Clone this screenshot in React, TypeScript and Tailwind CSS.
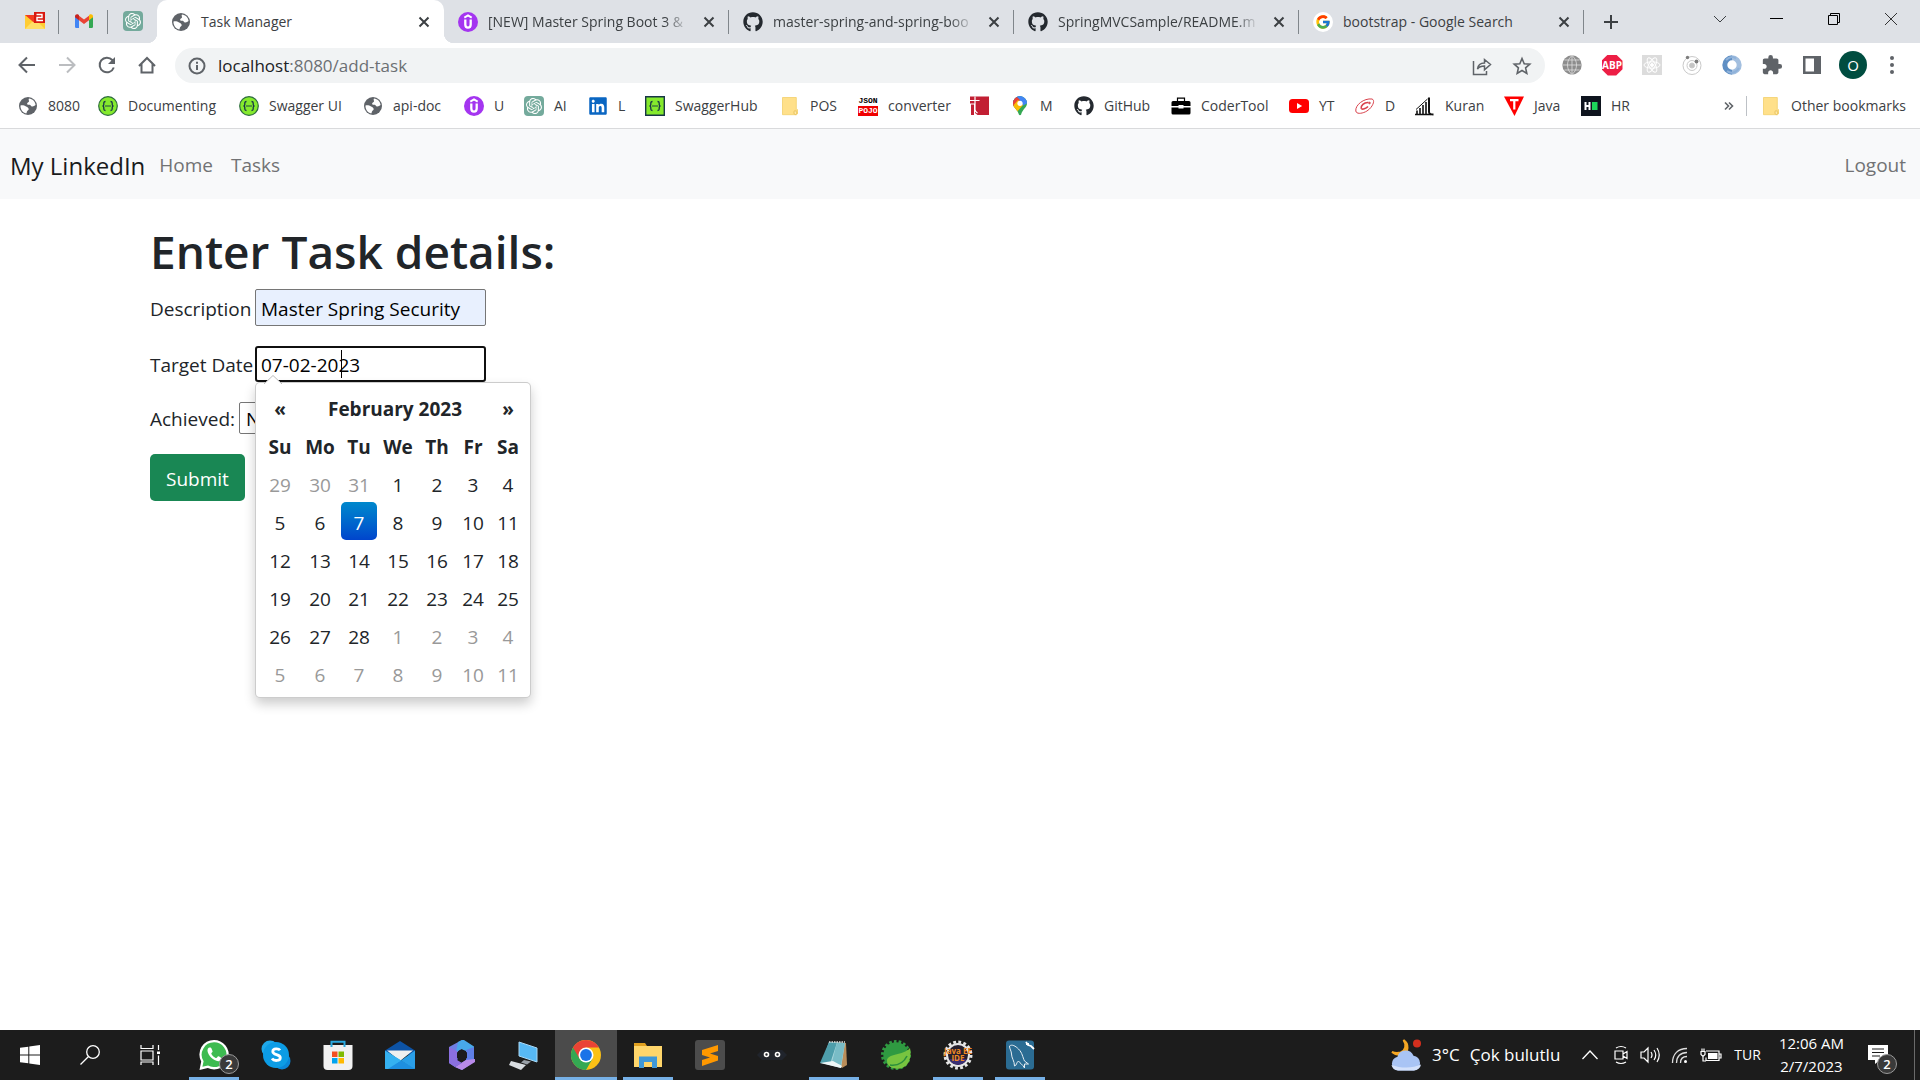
import React from "react";
import { FaGithub, FaLinkedin } from "react-icons/fa";
import { FcGoogle } from "react-icons/fc";
import { MdExtension } from "react-icons/md";
import { SiOpenai } from "react-icons/si";

type IconProps = { className?: string };

/* ---------- favicons ---------- */

const Globe = () => (
  <svg viewBox="0 0 20 20" className="size-5 shrink-0">
    <circle cx="10" cy="10" r="9" fill="#5f6368" />
    <path d="M11 2.500c3.500.4 6.200 3 6.600 6.600-1.200.5-2 1.700-3.600 1.500-1.200-.2-1-1.600-2.200-1.900-1.100-.2-2.600.2-2.700-1 0-1.200 1.600-1.100 1.900-2.100.2-1-.9-2-.0-3.100z" fill="#fff" />
    <path d="M2.500 9.500c1.800-.6 4 0 5.600.9 1.300.8 2.400 1.300 2.600 2.600.1 1.100-1.200 1.500-1.700 2.400-.3.700-.2 1.400-.8 2C4.800 16.700 2.200 13.500 2.500 9.500z" fill="#fff" />
  </svg>
);

const MailBadge = () => (
  <svg viewBox="0 0 20 20" className="size-5 shrink-0">
    <path d="M0 4h20v14H0z" fill="#fc3" />
    <path d="m0 18 7-7h6l7 7z" fill="#ffdf66" />
    <path d="M0 4h11v6l-1.500 2L0 4z" fill="#f33b1f" />
    <path d="M9 1h11v11H9z" fill="#d8180f" />
    <path d="M11.500 3.500h5.500v3h-5v3h6" fill="none" stroke="#fff" strokeWidth="1.400" />
  </svg>
);

const Gmail = () => (
  <svg viewBox="0 0 20 20" className="size-5 shrink-0">
    <path d="M1 5.500 5 8.600V17H2.200A1.200 1.200 0 0 1 1 15.800z" fill="#4285f4" />
    <path d="m15 8.600 4-3.100v10.300a1.200 1.200 0 0 1-1.200 1.200H15z" fill="#34a853" />
    <path d="m5 4.700 5 3.800 5-3.800v4.500l-5 3.800-5-3.800z" fill="#ea4335" />
    <path d="M1 5.200c0-1.900 2-2.600 3.300-1.600L5 4.200v5L1 6.200z" fill="#c5221f" />
    <path d="M19 5.200c0-1.900-2-2.600-3.300-1.600l-.7.6v5l4-3z" fill="#fbbc04" />
  </svg>
);

const OpenAi = () => (
  <span className="flex size-5 shrink-0 items-center justify-center rounded-sm bg-[#74aa9c] text-white">
    <SiOpenai className="size-4" />
  </span>
);

const Udemy = () => (
  <svg viewBox="0 0 20 20" className="size-5 shrink-0">
    <circle cx="10" cy="10" r="10" fill="#a435f0" />
    <path d="M6.300 5.600 10 3.400l3.700 2.200" fill="none" stroke="#fff" strokeWidth="1.900" />
    <path d="M7.300 7.500v5c0 2 1 3.100 2.700 3.100s2.700-1.100 2.700-3.100v-5" fill="none" stroke="#fff" strokeWidth="2.300" />
  </svg>
);

const Google = () => (
  <span className="flex size-5 shrink-0 items-center justify-center rounded-full bg-white">
    <FcGoogle className="size-4" />
  </span>
);

const Braces = () => (
  <>
    <path d="M7.500 5.500c-1.400 0-1.700.5-1.700 1.500v1.600c0 .9-.4 1.400-1.300 1.400.9 0 1.300.5 1.300 1.400V13c0 1 .3 1.500 1.700 1.500M12.500 5.500c1.400 0 1.700.5 1.700 1.500v1.600c0 .9.4 1.400 1.300 1.400-.9 0-1.300.5-1.300 1.400V13c0 1-.3 1.500-1.700 1.500" fill="none" stroke="#173647" strokeWidth="1.300" />
    <path d="M7.400 10h1.200M9.400 10h1.200M11.400 10h1.200" stroke="#173647" strokeWidth="1.300" />
  </>
);

const Swagger = () => (
  <svg viewBox="0 0 20 20" className="size-5 shrink-0">
    <circle cx="10" cy="10" r="9.300" fill="#85ea2d" stroke="#2b6b3d" strokeWidth="1.200" />
    <Braces />
  </svg>
);

const SwaggerHub = () => (
  <svg viewBox="0 0 20 20" className="size-5 shrink-0">
    <path d="M.7.7h18.600v18.600H.7z" fill="#85ea2d" stroke="#173647" strokeWidth="1.400" />
    <Braces />
  </svg>
);

const Folder = () => (
  <svg viewBox="0 0 20 20" className="size-5 shrink-0">
    <path d="M2.500 1.500h13.800v13l1.200-1v4.300l-1 .9H2.500z" fill="#ffe08a" stroke="#f3cf6b" strokeWidth=".8" />
    <path d="M14 15.500c0-1 2.800-1 2.800 1.300 0 1-.6 1.800-1.400 1.800s-1.400-.8-1.400-1.800z" fill="#ffe9a8" stroke="#e3b94d" strokeWidth=".8" />
  </svg>
);

const JsonPojo = () => (
  <span className="flex size-5 shrink-0 flex-col text-center font-['Liberation_Mono'] text-[8px] leading-[10px] font-bold">
    <span className="h-2.5 text-black">JSON</span>
    <span className="h-2.5 bg-[#f00000] text-white">POJO</span>
  </span>
);

const RedBook = () => (
  <svg viewBox="0 0 20 20" className="size-5 shrink-0">
    <path d="M0 .5h19V19H7.500L5 17V7.500H0z" fill="#c21f33" />
    <path d="M1 8.500h3V19H1z" fill="#c21f33" />
    <path d="M0 4.500h9.500M5 .5v13q0 2 2.500 3.500" fill="none" stroke="#fff" strokeWidth="1.200" />
  </svg>
);

const Maps = () => (
  <svg viewBox="0 0 20 20" className="size-5 shrink-0">
    <defs>
      <clipPath id="pin">
        <path d="M10 .3a7 7 0 0 1 7 7c0 4.200-4.200 5.700-5.900 11.200-.3 1.100-1.900 1.100-2.200 0C7.200 13 3 11.500 3 7.300a7 7 0 0 1 7-7z" />
      </clipPath>
    </defs>
    <g clipPath="url(#pin)">
      <path d="M0 0h20v20H0z" fill="#34a853" />
      <path d="M0 14 20-8H0z" fill="#1a73e8" />
      <path d="M7 0h13v6l-8 4z" fill="#4285f4" />
      <path d="M0 5v-5h6l4 4-6 8z" fill="#ea4335" />
      <path d="m2 11 6-7 5 5-7 8z" fill="#fbbc04" />
    </g>
    <circle cx="10" cy="7.300" r="2.600" fill="#fff" />
  </svg>
);

const GitHub = () => <FaGithub className="size-5 shrink-0 text-[#24292f]" />;
const LinkedIn = () => <FaLinkedin className="size-5 shrink-0 text-[#0a66c2]" />;

const Toolbox = () => (
  <svg viewBox="0 0 20 20" className="size-5 shrink-0">
    <path d="M6.500 5V2.200h7V5" fill="none" stroke="#000" strokeWidth="1.200" />
    <path d="M2 5h16q1.500 0 1.500 1.500V10H12.500V9h-5v1H.5V6.500Q.5 5 2 5zM.5 11.500h7v1h5v-1h7V17q0 1.500-1.500 1.500H2Q.5 18.500.5 17z" fill="#000" />
  </svg>
);

const YouTube = () => (
  <svg viewBox="0 0 20 20" className="size-5 shrink-0">
    <rect y="3" width="20" height="14" rx="3.500" fill="#f00" />
    <path d="m8 7 5.200 3L8 13z" fill="#fff" />
  </svg>
);

const Swirl = () => (
  <svg viewBox="0 0 20 20" className="size-5 shrink-0" fill="none" stroke="#d9414b">
    <path d="M17 3C9 2 0 9 .8 15c.5 4 9.200 2.500 13.700-2 4-4 5.500-9 2.500-10z" strokeWidth="1" />
    <path d="M13.500 6.500C9 6 5.500 10 6.200 12.300c.8 1.800 5 .2 6.800-1.800" strokeWidth="1.600" />
    <circle cx="14.500" cy="7" r=".8" fill="#d9414b" />
  </svg>
);

const Bars = () => (
  <svg viewBox="0 0 20 20" className="size-5 shrink-0" fill="none" stroke="#111">
    <path d="M0 18.500h16M2 18v-3.500M5 18v-6M8 18V9M11 18V6" strokeWidth="1.600" />
    <path d="M14 1.500V16q0 2.500 4.500 2.500" strokeWidth="2" />
    <path d="M1 13.500 12.500 3" strokeWidth="1" />
  </svg>
);

const Testify = () => (
  <svg viewBox="0 0 20 20" className="size-5 shrink-0">
    <path d="M0 .5h20L10.500 20z" fill="#f00" />
    <path d="M6 4.200h8.500M10.300 4.500v9" stroke="#fff" strokeWidth="2.200" />
  </svg>
);

const HackerRank = () => (
  <svg viewBox="0 0 20 20" className="size-5 shrink-0">
    <path d="M0 0h20v20H0z" fill="#0e141e" />
    <path d="M4.500 6v8M8.500 6v8M4.500 10h4" stroke="#fff" strokeWidth="2" />
    <path d="M11 6h5.500v8H11z" fill="#1dd65a" />
  </svg>
);

/* ---------- browser chrome ---------- */

const CloseX = () => (
  <svg viewBox="0 0 20 20" className="size-5" fill="none" stroke="#3c4043" strokeWidth="2">
    <path d="m5.500 5.500 9 9M14.500 5.500l-9 9" />
  </svg>
);

function Tab({ icon, title, active, faded }: { icon: React.ReactNode; title: string; active?: boolean; faded?: boolean }) {
  return (
    <div
      className={
        active
          ? "relative flex w-[287px] items-center gap-2.5 rounded-t-[10px] bg-white pr-2.5 pl-3.5"
          : "relative flex w-[285px] items-center gap-2.5 pr-2.5 pl-3.5"
      }
    >
      {active && (
        <>
          <span className="absolute bottom-0 -left-2.5 size-2.5 bg-[radial-gradient(circle_at_0_0,#dee1e6_10px,white_10.5px)]" />
          <span className="absolute -right-2.5 bottom-0 z-10 size-2.5 bg-[radial-gradient(circle_at_100%_0,#dee1e6_10px,white_10.5px)]" />
        </>
      )}
      {icon}
      <a
        href="#tab"
        className={
          faded
            ? "flex-1 [mask-image:linear-gradient(to_right,black_88%,transparent)] text-sm whitespace-nowrap text-[#3c4043]"
            : "flex-1 text-sm whitespace-nowrap text-[#3c4043]"
        }
      >
        {title}
      </a>
      <button aria-label={"Close " + title}>
        <CloseX />
      </button>
      {!active && <span className="absolute top-2.5 right-0 h-6 w-px bg-[#80868b]" />}
    </div>
  );
}

function TabStrip() {
  return (
    <div className="flex h-[43px] bg-[#dee1e6]">
      <div className="flex pb-px pl-2.5">
        {[<MailBadge key="m" />, <Gmail key="g" />, <OpenAi key="o" />].map((icon, i) => (
          <button key={i} aria-label="Pinned tab" className="relative flex w-[49px] items-center justify-center">
            {icon}
            {i < 2 && <span className="absolute top-2.5 right-0 h-6 w-px bg-[#80868b]" />}
          </button>
        ))}
      </div>
      <Tab active icon={<Globe />} title="Task Manager" />
      <Tab faded icon={<Udemy />} title="[NEW] Master Spring Boot 3 &" />
      <Tab faded icon={<GitHub />} title="master-spring-and-spring-boo" />
      <Tab faded icon={<GitHub />} title="SpringMVCSample/README.m" />
      <Tab icon={<Google />} title="bootstrap - Google Search" />
      <button aria-label="New tab" className="flex w-[54px] items-center justify-center">
        <svg viewBox="0 0 16 16" className="size-4" stroke="#3c4043" strokeWidth="2">
          <path d="M8 1v14M1 8h14" />
        </svg>
      </button>
      <div className="ml-auto flex pb-1.5">
        <button aria-label="Search tabs" className="flex w-[57px] items-center justify-center">
          <svg viewBox="0 0 14 14" className="size-3.5" fill="none" stroke="#3c4043">
            <path d="m1 4 6 6 6-6" />
          </svg>
        </button>
        <button aria-label="Minimize" className="flex w-[57px] items-center justify-center">
          <span className="h-px w-[13px] bg-black" />
        </button>
        <button aria-label="Restore" className="flex w-[57px] items-center justify-center">
          <svg viewBox="0 0 14 14" className="size-3.5" fill="none" stroke="#000">
            <path d="M1.500 3.500h9v9h-9zM3.500 3.500v-2h9v9h-2" />
          </svg>
        </button>
        <button aria-label="Close window" className="flex w-[58px] items-center justify-center">
          <svg viewBox="0 0 14 14" className="size-3.5" fill="none" stroke="#333">
            <path d="m1 1 12 12M13 1 1 13" />
          </svg>
        </button>
      </div>
    </div>
  );
}

function NavButton({ label, children, dim }: { label: string; children: React.ReactNode; dim?: boolean }) {
  return (
    <button aria-label={label} className={dim ? "flex w-10 items-center justify-center text-[#bbbdc0]" : "flex w-10 items-center justify-center text-[#5f6368]"}>
      <svg viewBox="0 0 20 20" className="size-5" fill="none" stroke="currentColor" strokeWidth="2">
        {children}
      </svg>
    </button>
  );
}

function Toolbar() {
  return (
    <div className="flex h-[45px] bg-white pr-2.5 pb-px pl-[7px]">
      <NavButton label="Back">
        <path d="M18 10H3M10 2.500 2.500 10l7.500 7.500" />
      </NavButton>
      <NavButton label="Forward" dim>
        <path d="M2 10h15M10 2.500l7.500 7.500-7.500 7.500" />
      </NavButton>
      <NavButton label="Reload">
        <path d="M16.800 12.500A7.300 7.300 0 1 1 15.300 5l1.500 1.500" />
        <path d="M18 2v7h-7z" fill="currentColor" stroke="none" />
      </NavButton>
      <NavButton label="Home">
        <path d="M2 11 10 3l8 8M4.500 9v8.500h11V9" />
      </NavButton>
      <div className="mt-[5px] ml-2 flex h-[35px] flex-1 items-center rounded-full bg-[#f1f3f4] pr-[13px] pl-3">
        <svg viewBox="0 0 20 20" className="size-5" fill="none" stroke="#5f6368" strokeWidth="2">
          <circle cx="10" cy="10" r="7.500" />
          <path d="M10 9v5M10 5.800v1.900" />
        </svg>
        <a href="#address" className="ml-[11px] flex-1 text-[17px] leading-6 text-[#6b6f73]">
          <span className="text-[#202124]">localhost</span>:8080/add-task
        </a>
        <button aria-label="Share">
          <svg viewBox="0 0 20 20" className="size-5" fill="none" stroke="#5f6368" strokeWidth="1.500">
            <path d="M1.500 5v13.500h13V15M5.500 13c.5-4 3-6 7-6V3.500l6 5-6 5.300v-3.700c-3.500 0-5.500.8-7 2.900z" />
          </svg>
        </button>
        <button aria-label="Bookmark this page" className="ml-5">
          <svg viewBox="0 0 20 20" className="size-5" fill="none" stroke="#5f6368" strokeWidth="1.600">
            <path d="m10 2.500 2.200 5.200 5.600.5-4.200 3.700 1.200 5.500-4.800-2.900-4.800 2.900 1.200-5.500-4.200-3.700 5.600-.5z" />
          </svg>
        </button>
      </div>
      <div className="ml-[7px] flex items-center">
        <button aria-label="Translate extension" className="flex w-10 justify-center">
          <svg viewBox="0 0 20 20" className="size-5">
            <circle cx="10" cy="10" r="9.700" fill="#8d8d8d" />
            <path d="M10 0v20M.5 10h19M2.500 5h15M2.500 15h15M10 .5C4 5 4 15 10 19.500M10 .5c6 4.500 6 14.500 0 19" fill="none" stroke="#e0e0e0" strokeWidth=".8" />
          </svg>
        </button>
        <button aria-label="Ad block" className="flex w-10 justify-center">
          <span className="flex size-[21px] items-center justify-center bg-[#ed1e45] text-[10px] font-bold text-white [clip-path:polygon(30%_0,70%_0,100%_30%,100%_70%,70%_100%,30%_100%,0_70%,0_30%)]">
            ABP
          </span>
        </button>
        <button aria-label="React tools" className="flex w-10 justify-center">
          <svg viewBox="0 0 20 20" className="size-5" fill="none" stroke="#fff">
            <path d="M0 0h20v20H0z" fill="#dcdcdc" stroke="none" />
            <ellipse cx="10" cy="10" rx="8" ry="3.200" />
            <ellipse cx="10" cy="10" rx="8" ry="3.200" transform="rotate(60 10 10)" />
            <ellipse cx="10" cy="10" rx="8" ry="3.200" transform="rotate(120 10 10)" />
            <circle cx="10" cy="10" r="1.500" fill="#fff" />
          </svg>
        </button>
        <button aria-label="Orbit extension" className="flex w-10 justify-center">
          <svg viewBox="0 0 20 20" className="size-5" fill="none" stroke="#c9c9c9">
            <circle cx="10" cy="10.500" r="9" />
            <circle cx="10" cy="10.500" r="5" />
            <circle cx="10" cy="10.500" r="2.500" fill="#c4c4c4" />
            <circle cx="5.500" cy="2.500" r="1.700" fill="#7d7d7d" stroke="none" />
            <circle cx="14.500" cy="6.500" r="1.900" fill="#7d7d7d" stroke="none" />
          </svg>
        </button>
        <button aria-label="JSON viewer" className="flex w-10 justify-center">
          <svg viewBox="0 0 20 20" className="size-5" fill="none" strokeWidth="5">
            <path d="M10 2.800a7.200 7.200 0 0 1 0 14.400" stroke="#a3bfdf" />
            <path d="M10 17.200a7.200 7.200 0 0 1 0-14.400" stroke="#5f8fc4" />
            <path d="M5 16c4 3 9 2 12-3M14 3.500C11 1 7 2 4 5" stroke="#8fb2da" strokeWidth="2" />
          </svg>
        </button>
        <button aria-label="Extensions" className="flex w-10 justify-center text-[#5f6368]">
          <MdExtension className="size-[22px]" />
        </button>
        <button aria-label="Side panel" className="flex w-10 justify-center">
          <svg viewBox="0 0 18 18" className="size-[18px]">
            <path d="M0 0h18v18H0zM2.500 2.500v13H11v-13z" fill="#5f6368" fillRule="evenodd" />
          </svg>
        </button>
        <button aria-label="Profile" className="mx-[7px] flex size-7 items-center justify-center rounded-full bg-[#004d40] text-[15px] leading-5 text-white">
          O
        </button>
        <button aria-label="Menu" className="flex w-9 flex-col items-center gap-[3px]">
          <span className="size-1 rounded-full bg-[#5f6368]" />
          <span className="size-1 rounded-full bg-[#5f6368]" />
          <span className="size-1 rounded-full bg-[#5f6368]" />
        </button>
      </div>
    </div>
  );
}

const bookmarks: { icon: React.ReactNode; label: string; box: string }[] = [
  { icon: <Globe />, label: "8080", box: "w-20" },
  { icon: <Swagger />, label: "Documenting", box: "w-[141px]" },
  { icon: <Swagger />, label: "Swagger UI", box: "w-[124px]" },
  { icon: <Globe />, label: "api-doc", box: "w-[101px]" },
  { icon: <Udemy />, label: "U", box: "w-[60px]" },
  { icon: <OpenAi />, label: "AI", box: "w-16" },
  { icon: <LinkedIn />, label: "L", box: "w-[57px]" },
  { icon: <SwaggerHub />, label: "SwaggerHub", box: "w-[135px]" },
  { icon: <Folder />, label: "POS", box: "w-[78px]" },
  { icon: <JsonPojo />, label: "converter", box: "w-28" },
  { icon: <RedBook />, label: "", box: "w-10" },
  { icon: <Maps />, label: "M", box: "w-16" },
  { icon: <GitHub />, label: "GitHub", box: "w-[97px]" },
  { icon: <Toolbox />, label: "CoderTool", box: "w-[118px]" },
  { icon: <YouTube />, label: "YT", box: "w-[66px]" },
  { icon: <Swirl />, label: "D", box: "w-[60px]" },
  { icon: <Bars />, label: "Kuran", box: "w-[89px]" },
  { icon: <Testify />, label: "Java", box: "w-[77px]" },
  { icon: <HackerRank />, label: "HR", box: "w-16" },
];

function BookmarksBar() {
  return (
    <nav aria-label="Bookmarks" className="flex h-[41px] items-center border-b border-[#d9dadc] bg-white pr-3.5 pb-1 pl-[18px] text-sm whitespace-nowrap text-[#3c4043]">
      {bookmarks.map((b, i) => (
        <a key={i} href="#bookmark" aria-label={b.label || "Bookmark"} className={"flex shrink-0 items-center gap-2.5 " + b.box}>
          {b.icon}
          {b.label}
        </a>
      ))}
      <button aria-label="More bookmarks" className="ml-auto px-3">
        <svg viewBox="0 0 10 10" className="size-2.5" fill="none" stroke="#5f6368" strokeWidth="1.600">
          <path d="m1 1.500 3.500 3.500L1 8.500M5 1.500 8.500 5 5 8.500" />
        </svg>
      </button>
      <span className="h-5 w-px bg-[#bdc1c6]" />
      <a href="#other" className="ml-3.5 flex items-center gap-2.5">
        <Folder />
        Other bookmarks
      </a>
    </nav>
  );
}

/* ---------- page ---------- */

function SiteNav() {
  return (
    <nav className="flex h-[70px] items-center bg-[#f8f9fa] px-2.5 pt-[3px] text-[19px] text-[#717274]">
      <a href="#brand" className="mr-3.5 text-2xl text-[#1a1b1c]">My LinkedIn</a>
      <a href="#home" className="mr-[18px]">Home</a>
      <a href="#tasks">Tasks</a>
      <a href="#logout" className="mr-1 ml-auto">Logout</a>
    </nav>
  );
}

const dayNames = ["Su", "Mo", "Tu", "We", "Th", "Fr", "Sa"];
const columns = ["w-[38px]", "w-[42px]", "w-9", "w-[42px]", "w-9", "w-9", "w-[34px]"];
const weeks = [
  [29, 30, 31, 1, 2, 3, 4],
  [5, 6, 7, 8, 9, 10, 11],
  [12, 13, 14, 15, 16, 17, 18],
  [19, 20, 21, 22, 23, 24, 25],
  [26, 27, 28, 1, 2, 3, 4],
  [5, 6, 7, 8, 9, 10, 11],
];

function dayClass(week: number, day: number) {
  const outside = (week === 0 && day > 20) || (week === 4 && day < 20) || week === 5;
  if (outside) return "h-[38px] w-full pt-[3px] text-[#999999]";
  if (week === 1 && day === 7) return "h-[38px] w-full rounded-[5px] bg-linear-to-b from-[#0088cc] to-[#0044cc] pt-[3px] text-white";
  return "h-[38px] w-full pt-[3px]";
}

function Calendar() {
  return (
    <div className="absolute top-full left-0 z-20 w-max rounded-[5px] border border-black/20 bg-white p-[5px] shadow-[0_6px_12px_rgba(0,0,0,0.2)]">
      <svg viewBox="0 0 18 9" className="absolute -top-2 left-2 h-[9px] w-[18px]">
        <path d="m0 9 9-8.500L18 9z" fill="#fff" />
        <path d="m0 9 9-8.500L18 9" fill="none" stroke="#bbb" />
      </svg>
      <table className="w-[264px] table-fixed border-collapse text-center text-[19px] leading-6 text-[#212529]">
        <colgroup>
          {columns.map((c, i) => (
            <col key={i} className={c} />
          ))}
        </colgroup>
        <thead>
          <tr className="h-[38px]">
            <th className="p-0 pt-[3px]"><button aria-label="Previous month" className="font-bold">«</button></th>
            <th className="p-0 pt-[3px]" colSpan={5}><button className="font-bold">February 2023</button></th>
            <th className="p-0 pt-[3px]"><button aria-label="Next month" className="font-bold">»</button></th>
          </tr>
          <tr className="h-[38px]">
            {dayNames.map((d) => (
              <th key={d} className="p-0 pt-[3px] font-bold">{d}</th>
            ))}
          </tr>
        </thead>
        <tbody>
          {weeks.map((days, w) => (
            <tr key={w} className="h-[38px]">
              {days.map((d, i) => (
                <td key={i} className="p-0">
                  <button className={dayClass(w, d)}>{d}</button>
                </td>
              ))}
            </tr>
          ))}
        </tbody>
      </table>
    </div>
  );
}

function TaskForm() {
  return (
    <main className="flex-1">
      <div className="mx-auto max-w-[1650px] px-[15px] pt-[22px] text-[19px] leading-[30px] text-[#212529]">
        <h1 className="text-[46px] leading-[60px] font-semibold">Enter Task details:</h1>
        <form onSubmit={(e) => e.preventDefault()}>
          <div className="mt-2 flex items-center">
            <label htmlFor="description" className="w-[105px] pt-0.5">Description</label>
            <input id="description" defaultValue="Master Spring Security" className="h-[37px] w-[231px] rounded-[2px] border border-[#767676] bg-[#e8f0fe] px-[5px] pt-0.5 text-black" />
          </div>
          <div className="mt-5 flex items-center">
            <label htmlFor="target" className="w-[105px] pt-0.5">Target Date</label>
            <div className="relative">
              <input id="target" defaultValue="07-02-2023" className="block h-9 w-[231px] rounded-[3px] border-2 border-[#101010] bg-white px-1 pt-0.5 text-black" />
              <span className="absolute top-1 left-[86px] h-7 w-px bg-black" />
              <Calendar />
            </div>
          </div>
          <div className="mt-5 flex items-center">
            <label htmlFor="achieved" className="w-[89px] pt-0.5">Achieved:</label>
            <select id="achieved" className="h-8 w-20 appearance-none rounded-[2px] border border-[#767676] bg-white px-1.5 pt-0.5 leading-7 text-black">
              <option>No</option>
              <option>Yes</option>
            </select>
          </div>
          <button className="mt-5 h-[47px] rounded-[5px] bg-[#198754] px-4 pt-[3px] text-white">Submit</button>
        </form>
      </div>
    </main>
  );
}

/* ---------- taskbar ---------- */

const big = "size-8";

const WhatsApp = () => (
  <svg viewBox="0 0 32 32" className={big}>
    <path d="M16 1a14.500 14.500 0 0 0-12.800 21.500L1.500 31l8.300-2A14.700 14.700 0 1 0 16 1z" fill="#fff" />
    <path d="M16.200 3.300a12.400 12.400 0 0 0-10.600 19l-1.200 5.500 5.600-1.300A12.400 12.400 0 1 0 16.200 3.300z" fill="#3dbb50" />
    <path d="M11.500 8.500c-1 0-2.300 1.600-2 3.500.7 4.800 6 9.700 10.700 10.200 2 .2 3.600-1.300 3.500-2.700 0-.6-3-2.300-3.500-2.200-.6.1-1.300 1.800-1.900 1.800-1.500-.2-4.600-3-5-4.700 0-.5 1.400-1.400 1.300-2-.1-.7-1.300-3.800-2-3.900z" fill="#fff" />
  </svg>
);
const Skype = () => (
  <svg viewBox="0 0 32 32" className={big}>
    <circle cx="10" cy="10" r="8.500" fill="#1fa8ea" />
    <circle cx="22" cy="22" r="8.500" fill="#0a86d8" />
    <circle cx="16" cy="16" r="13" fill="#0c9ce5" />
    <path d="M20 11.200c-1.200-1.700-7.200-2-7.200 1.300 0 4 7.500 2.200 7.500 6.300 0 3.400-6.500 3.500-8.300.7" fill="none" stroke="#fff" strokeWidth="2.800" />
  </svg>
);
const Store = () => (
  <svg viewBox="0 0 32 32" className={big}>
    <path d="M1.500 6h29v21q0 4-4 4h-21q-4 0-4-4z" fill="#f1f1f1" />
    <path d="M9.500 8V2.800h13V8" fill="none" stroke="#29a9e0" strokeWidth="2" />
    <path d="M10 12.500h5.500V18H10z" fill="#f25022" />
    <path d="M16.500 12.500H22V18h-5.500z" fill="#7fba00" />
    <path d="M10 19h5.500v5.500H10z" fill="#00a4ef" />
    <path d="M16.500 19H22v5.500h-5.500z" fill="#ffb900" />
  </svg>
);
const Mail = () => (
  <svg viewBox="0 0 32 32" className={big}>
    <path d="M1 11.500 16 2l15 9.500v4H1z" fill="#0d53a5" />
    <path d="M3 11.500h26L16 22z" fill="#f0f0f0" />
    <path d="m1 11.500 30 18.500H2q-1 0-1-1z" fill="#35b1f0" />
    <path d="m17 21.400 14-9.900V29q0 1-1 1z" fill="#2a9fe8" />
    <path d="m17 21.400 14 8.600H1z" fill="#1e8fe0" />
    <path d="M1 12v17q0 1 1 1h2l13-8.500z" fill="#35b1f0" />
  </svg>
);
const Office = () => (
  <svg viewBox="0 0 32 32" className={big}>
    <path d="M16 1 3 8v16l6 4 3-9V12l9-5z" fill="#6f7fe4" />
    <path d="M16 1h2l10 6.500V17l-8-5-5-2-5 3 2-10z" fill="#48a8ea" />
    <path d="M28 8v15l-12 8-7-3 11-7V11z" fill="#5f7fe6" />
    <path d="m29 20-9 1-11 7 7 3 13-8z" fill="#b98aea" />
    <path d="m3 8 8 4v9l5 3-7 4-6-4z" fill="#8b6fe0" />
    <path d="m16 10.500 5 3v5.500l-5 3-5-3v-5.500z" fill="#1c1c1c" />
  </svg>
);
const Computer = () => (
  <svg viewBox="0 0 32 32" className={big}>
    <path d="m11 3 18 6v14l-18-6z" fill="#57b9f5" stroke="#a9d8f5" />
    <path d="m16 21 7 1.500-4 3-6-2z" fill="#9aa1a8" />
    <path d="m3 22 15 4-5 5L1 26z" fill="#d9dde1" />
  </svg>
);
const Chrome = () => (
  <svg viewBox="0 0 32 32" className={big}>
    <circle cx="16" cy="16" r="15" fill="#fbc116" />
    <path d="M16 16 3 8.500A15 15 0 0 0 16 31l6.500-11.300z" fill="#34a853" />
    <path d="M3 8.500a15 15 0 0 1 26 0H16L9.500 19.800z" fill="#ea4335" />
    <circle cx="16" cy="16" r="7.500" fill="#fff" />
    <circle cx="16" cy="16" r="5.900" fill="#1a73e8" />
  </svg>
);
const Explorer = () => (
  <svg viewBox="0 0 32 32" className={big}>
    <path d="M2 4h11l2 3v4H2z" fill="#e0a020" />
    <path d="M2 7h28v21H2z" fill="#ffd66b" />
    <path d="M7 17.500h18V29h-5v-6h-8v6H7z" fill="#3f98d8" />
  </svg>
);
const Sublime = () => (
  <svg viewBox="0 0 32 32" className={big}>
    <rect x="1" y="1" width="30" height="30" rx="3" fill="#4c4c4c" />
    <path d="m8 11 16-5v6l-8 2.500 8 2.500v4.500L8 27v-6l8-2.500L8 16z" fill="#ff9800" />
  </svg>
);
const Eyes = () => (
  <svg viewBox="0 0 32 32" className={big}>
    <path d="m1 16 5-5h20l5 5-5 5H6z" fill="#20242c" />
    <circle cx="10.500" cy="15.500" r="2" fill="none" stroke="#fff" strokeWidth="1.600" />
    <circle cx="21.500" cy="15.500" r="2" fill="none" stroke="#fff" strokeWidth="1.600" />
  </svg>
);
const Notepad = () => (
  <svg viewBox="0 0 32 32" className={big}>
    <path d="m12 3 16 1 1 22-5 3z" fill="#b98d5a" />
    <path d="m11 3 16 1-4 25-19-5z" fill="#a9d6dc" />
    <path d="m11 3 8 .5L12 25l-10-1z" fill="#4e9eab" />
    <path d="m19 3.500 8 .5-4 22-9-3z" fill="#79bcc6" />
    <path d="m2 24 13-2 9 5-1 2z" fill="#eef6f7" />
    <path d="M11 3h16" stroke="#ddd" strokeWidth="1.600" strokeDasharray="1.500 1" />
  </svg>
);
const Spring = () => (
  <svg viewBox="0 0 32 32" className={big}>
    <circle cx="16" cy="16" r="13.500" fill="none" stroke="#2f9a41" strokeWidth="3" strokeDasharray="2.600 2.100" />
    <circle cx="16" cy="16" r="12.700" fill="#2f9a41" />
    <path d="M30 9c2 9-1 19-10 20.500C12 30.500 7 27 7 22c0-8 16-5 23-13z" fill="#77c440" />
    <path d="M10 26c8 1 14-3 17-9" fill="none" stroke="#2b8f3c" strokeWidth="1.600" />
  </svg>
);
const JavaEe = () => (
  <span className="relative flex size-8 items-center justify-center">
    <svg viewBox="0 0 32 32" className={big}>
      <circle cx="16" cy="16" r="13" fill="none" stroke="#e6e6e6" strokeWidth="3" strokeDasharray="2.800 2.300" />
      <circle cx="16" cy="16" r="11" fill="#26202e" stroke="#e6e6e6" strokeWidth="2" />
      <path d="M7 20h18a10 10 0 0 1-18 0z" fill="#3a2f74" />
    </svg>
    <span className="absolute inset-x-0 top-2 text-center text-[8px] leading-[7px] font-bold text-[#f08a24]">
      <span className="block whitespace-nowrap">Java EE</span>
      <span className="block">IDE</span>
    </span>
  </span>
);
const MySql = () => (
  <svg viewBox="0 0 32 32" className={big}>
    <rect x="2" y="1.500" width="28" height="29" rx="3" fill="#2b6c93" />
    <path d="M5.500 7c2.500-2 6 0 9 3 4 4 4 8 6 12l4 3h-4v4c-2-4-4-4-6-7-2 1-2 5-4 5 0-5-3-8-3-12 0-3-2-5-2-8z" fill="none" stroke="#e7eef3" strokeWidth="1" />
    <path d="m22 3 2 3 3 1 3 3M22 5h3" fill="none" stroke="#fff" strokeWidth="1.800" />
  </svg>
);

const apps: { name: string; icon: React.ReactNode; open?: boolean; active?: boolean; badge?: string }[] = [
  { name: "WhatsApp", icon: <WhatsApp />, open: true, badge: "2" },
  { name: "Skype", icon: <Skype /> },
  { name: "Store", icon: <Store /> },
  { name: "Mail", icon: <Mail /> },
  { name: "Office", icon: <Office /> },
  { name: "This PC", icon: <Computer /> },
  { name: "Chrome", icon: <Chrome />, open: true, active: true },
  { name: "File Explorer", icon: <Explorer />, open: true },
  { name: "Sublime Text", icon: <Sublime /> },
  { name: "Recorder", icon: <Eyes /> },
  { name: "Notepad", icon: <Notepad />, open: true },
  { name: "Spring Tools", icon: <Spring /> },
  { name: "Eclipse", icon: <JavaEe />, open: true },
  { name: "MySQL Workbench", icon: <MySql />, open: true },
];

function CountBadge({ className }: IconProps) {
  return (
    <span className={"absolute flex size-5 items-center justify-center rounded-full border border-[#9a9a9a] bg-[#3a3a3a] text-[13px] leading-4 font-semibold text-white " + className}>
      2
    </span>
  );
}

function Taskbar() {
  return (
    <footer className="flex h-[50px] bg-[#1c1c1c] text-white">
      <button aria-label="Start" className="flex w-[60px] items-center justify-center">
        <svg viewBox="0 0 20 20" className="size-5" fill="#fff">
          <path d="M0 2.800 8.300 1.700v7.800H0zM9.300 1.500 20 0v9.500H9.300zM0 10.500h8.300v7.800L0 17.200zM9.300 10.500H20V20L9.300 18.500z" />
        </svg>
      </button>
      <button aria-label="Search" className="flex w-[60px] items-center justify-center">
        <svg viewBox="0 0 20 20" className="size-5" fill="none" stroke="#fff" strokeWidth="1.300">
          <circle cx="13" cy="7" r="6.300" />
          <path d="M8.500 11.500.5 19.500" />
        </svg>
      </button>
      <button aria-label="Task view" className="flex w-[60px] items-center justify-center">
        <svg viewBox="0 0 20 20" className="size-5" fill="none" stroke="#fff" strokeWidth="1.200">
          <path d="M1 0v3.500h12V0M1 6h12v9H1zM1 20v-3h12v3M18.500 0v5M18.500 10.500V20" />
          <path d="M17 6.500h3V9h-3z" fill="#fff" stroke="none" />
        </svg>
      </button>
      <div className="ml-[3px] flex">
        {apps.map((a) => (
          <button key={a.name} aria-label={a.name} className={a.active ? "relative flex w-[62px] items-center justify-center bg-[#4b4b4b]" : "relative flex w-[62px] items-center justify-center"}>
            {a.icon}
            {a.open && <span className={a.active ? "absolute inset-x-0 bottom-0 h-[3px] bg-[#76b0e6]" : "absolute inset-x-1.5 bottom-0 h-[3px] bg-[#76b0e6]"} />}
            {a.badge && <CountBadge className="top-6 right-1.5" />}
          </button>
        ))}
      </div>
      <div className="ml-auto flex items-center">
        <button className="flex items-center text-[17px] whitespace-nowrap">
          <svg viewBox="0 0 32 32" className="mr-2.5 size-8">
            <path d="M13.500 1c3.500 5 2 11-3 12.500-3 .8-6 .5-8.500-.5 6 5 15 4 15.500-4 .2-3-1.500-6.500-4-8z" fill="#f5a623" stroke="#f5a623" strokeWidth="2" />
            <circle cx="27" cy="4.500" r="4" fill="#d32f1e" />
            <path d="M8 31.500a7 7 0 0 1-.5-13.800 8.500 8.500 0 0 1 16-1A7.500 7.500 0 0 1 24 31.500z" fill="#a9c4f5" />
            <path d="M1.500 26a7 7 0 0 0 6.500 5.500h16a7 7 0 0 0 7-6c-8 4-20 4-29.500.5z" fill="#d4e1fb" />
          </svg>
          <span className="mr-2.5">3°C</span>
          <span>Çok bulutlu</span>
        </button>
        <button aria-label="Hidden icons" className="ml-[22px]">
          <svg viewBox="0 0 16 16" className="size-4" fill="none" stroke="#fff" strokeWidth="1.300">
            <path d="m.5 12 7.500-8 7.500 8" />
          </svg>
        </button>
        <button aria-label="Camera" className="ml-3.5">
          <svg viewBox="0 0 18 20" className="h-5 w-[18px]" fill="none" stroke="#fff" strokeWidth="1.200">
            <path d="M3 6h8v8H3zM11 9l4-2.500v7L11 11M4 3q5-3 10 0M4 17q5 3 10 0" />
          </svg>
        </button>
        <button aria-label="Volume" className="ml-2.5">
          <svg viewBox="0 0 20 18" className="h-[18px] w-5" fill="none" stroke="#fff" strokeWidth="1.200">
            <path d="M1 6h3l4-4v14l-4-4H1zM11 6q2 3 0 6M14 4q3.500 5 0 10M17 2q4.500 7 0 14" />
          </svg>
        </button>
        <button aria-label="Network" className="ml-2.5">
          <svg viewBox="0 0 20 18" className="h-[18px] w-5" fill="none" stroke="#ddd" strokeWidth="1.300">
            <path d="M2.500 17C2.500 8 8 2.500 17 2.500M6.500 17c0-6.500 4-10.500 10.500-10.500M10.500 17c0-4 2.500-6.500 6.500-6.500" />
            <circle cx="15.500" cy="15.500" r="1.500" fill="#fff" stroke="none" />
          </svg>
        </button>
        <button aria-label="Battery" className="ml-2.5">
          <svg viewBox="0 0 22 16" className="h-4 w-[22px]" fill="none" stroke="#fff" strokeWidth="1.200">
            <path d="M6 4h13v9.500H6v-3M19.500 7H21v4h-1.500M3 9.500V14h3M1 4.500h4v3L3 9.500l-2-2zM2 4.500v-3M4 4.500v-3" />
            <path d="M8 6h9.500v6H8z" fill="#fff" stroke="none" />
          </svg>
        </button>
        <button className="ml-3 text-sm">TUR</button>
        <button className="ml-[18px] text-center text-[15px] leading-[23px]">
          <span className="block">12:06 AM</span>
          <span className="block">2/7/2023</span>
        </button>
        <button aria-label="Notifications" className="relative ml-[22px] h-[50px] w-[30px]">
          <svg viewBox="0 0 20 20" className="absolute top-3.5 left-0.5 size-5">
            <path d="M0 1h20v15h-8l-5 4v-4H0z" fill="#fff" />
            <path d="M4 5h12M4 8.500h12M4 12h8" stroke="#1c1c1c" strokeWidth="1.200" />
          </svg>
          <CountBadge className="top-6 left-[11px]" />
        </button>
        <span className="ml-[18px] h-[50px] w-px bg-[#6a6a6a]" />
        <span className="w-[5px]" />
      </div>
    </footer>
  );
}

export default function App() {
  return (
    <div className="flex min-h-screen flex-col bg-white font-['Open_Sans','Noto_Sans',sans-serif]">
      <TabStrip />
      <Toolbar />
      <BookmarksBar />
      <SiteNav />
      <TaskForm />
      <Taskbar />
    </div>
  );
}
